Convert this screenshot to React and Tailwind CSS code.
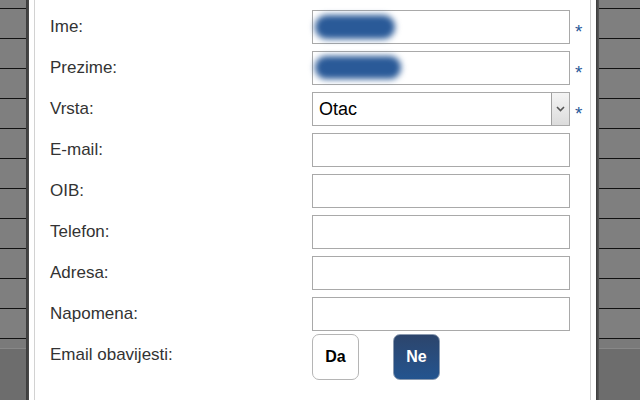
import React from 'react';

const polja = [
  { label: 'Ime:', obavezno: true, mrlja: 'w-[80px] h-[24px] left-[2px] top-[4px]' },
  { label: 'Prezime:', obavezno: true, mrlja: 'w-[86px] h-[23px] left-[2px] top-[4px]' },
  { label: 'Vrsta:', obavezno: true, select: true },
  { label: 'E-mail:' },
  { label: 'OIB:' },
  { label: 'Telefon:' },
  { label: 'Adresa:' },
  { label: 'Napomena:' },
];

// pozadina iza modala - sive trake s crnim linijama
const Traka = () => (
  <div className="flex flex-col h-full">
    <div className="h-[8px] bg-[#7f7f7f]" />
    {Array.from({ length: 11 }).map((_, i) => (
      <div key={i} className="h-[30px] bg-[#7f7f7f] border-t border-[#111]" />
    ))}
    <div className="h-[10px] bg-[#7a7a7a] border-t border-[#111]" />
    <div className="flex-1 bg-[#6d6d6d] border-t border-[#888]" />
  </div>
);

const Zvjezdica = () => (
  <span className="w-[20px] pl-[5px] pt-[9px] text-[19px] text-[#2a5a9a] leading-none">*</span>
);

const App = () => {
  return (
    <div className="w-[640px] h-[400px] flex overflow-hidden" style={{ fontFamily: '"Liberation Sans", Arial, sans-serif' }}>
      <div className="w-[26px]">
        <Traka />
      </div>
      <div className="w-[3px] bg-gradient-to-r from-[#3a3a3a] to-[#4a4a4a]" />

      <div className="flex-1 bg-white flex px-[5px]">
        <div className="flex-1 border-l border-r border-[#d2d2d2] pl-[15px] pt-[10px]">
          <div className="flex flex-col gap-[7px]">
            {polja.map(p => (
              <div key={p.label} className="flex items-center h-[34px]">
                <label className="w-[262px] text-[17px] text-[#333]">{p.label}</label>
                {p.select ? (
                  <div className="w-[258px] h-[34px] border border-[#a9a9a9] flex items-center bg-white">
                    <span className="flex-1 pl-[6px] text-[18px] text-black">Otac</span>
                    <div className="w-[18px] h-full border-l border-[#a0a0a0] bg-gradient-to-b from-[#f4f4f4] to-[#dcdcdc] flex items-center justify-center">
                      <svg width="9" height="6" viewBox="0 0 9 6">
                        <path d="M1 1 L4.5 4.5 L8 1" fill="none" stroke="#555" strokeWidth="1.6" />
                      </svg>
                    </div>
                  </div>
                ) : (
                  <div className="relative w-[258px] h-[34px] border border-[#a9a9a9] bg-white">
                    {p.mrlja && (
                      <div className={`absolute rounded-full bg-[#2a5a98] blur-[3px] ${p.mrlja}`} />
                    )}
                  </div>
                )}
                {p.obavezno && <Zvjezdica />}
              </div>
            ))}

            <div className="flex items-center h-[46px] -mt-[4px]">
              <label className="w-[262px] text-[17px] text-[#333] pb-[5px]">Email obavijesti:</label>
              <button className="w-[47px] h-[46px] rounded-[7px] border border-[#b5b5b5] bg-white text-[16px] font-bold text-black">
                Da
              </button>
              <button className="ml-[34px] w-[47px] h-[46px] rounded-[7px] border border-[#8a9ab0] bg-gradient-to-b from-[#2c456c] to-[#23548f] text-[16px] font-bold text-white">
                Ne
              </button>
            </div>
          </div>
        </div>
      </div>

      <div className="w-[3px] bg-gradient-to-r from-[#3c3c3c] to-[#5a5a5a]" />
      <div className="flex-1">
        <Traka />
      </div>
    </div>
  );
};

export default App;
